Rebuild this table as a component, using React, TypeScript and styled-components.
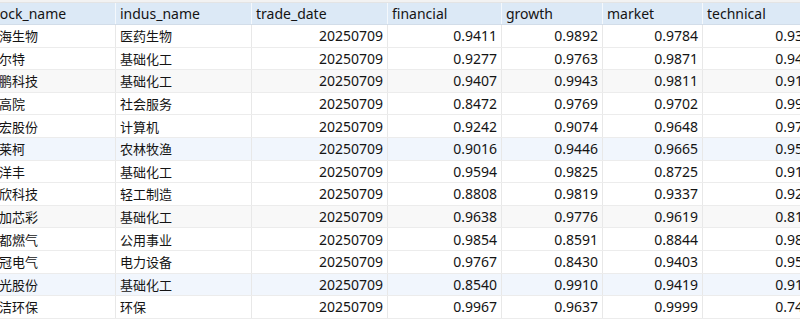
import React from "react";
import styled, { createGlobalStyle } from "styled-components";

const GlobalStyle = createGlobalStyle`
  html, body {
    margin: 0;
    padding: 0;
    background: #ffffff;
  }
`;

const COLS = "132px 136px 136px 114px 101px 100px 121px";

const Viewport = styled.div`
  width: 800px;
  height: 320px;
  overflow: hidden;
  background: #ffffff;
  font-family: "Noto Sans", "Noto Sans CJK SC", sans-serif;
  font-size: 14px;
  color: #141414;
`;

const TopStrip = styled.div`
  height: 3px;
  background: #f2f2f2;
  border-bottom: 1px solid #e4e4e4;
  box-sizing: border-box;
`;

// scrolled horizontally, so the first column is partly hidden
const Grid = styled.div`
  margin-left: -16px;
  width: max-content;
`;

const HeaderRow = styled.div`
  display: grid;
  grid-template-columns: ${COLS};
  height: 21px;
  background: #dce9f6;
  border-bottom: 1px solid #d2dde9;
`;

const HeaderCell = styled.div`
  display: flex;
  align-items: center;
  padding: 0 4px;
  border-right: 1px solid #f4f8fc;
  white-space: nowrap;
  overflow: hidden;
`;

const Row = styled.div<{ $tint?: "gray" | "blue" }>`
  display: grid;
  grid-template-columns: ${COLS};
  height: 22.6px;
  box-sizing: border-box;
  border-bottom: 1px solid #ececec;
  background: ${(p) =>
    p.$tint === "gray" ? "#f8f8f8" : p.$tint === "blue" ? "#f1f6fd" : "#ffffff"};
`;

const Cell = styled.div`
  display: flex;
  align-items: center;
  border-right: 1px solid #e8e8e8;
  white-space: nowrap;
  overflow: hidden;
`;

const TextCell = styled(Cell)<{ $first?: boolean }>`
  justify-content: flex-start;
  padding-left: ${(p) => (p.$first ? "2px" : "4px")};
  font-size: 13px;
`;

const NumCell = styled(Cell)`
  justify-content: flex-end;
  padding-right: 4px;
`;

const headers = [
  "stock_name",
  "indus_name",
  "trade_date",
  "financial",
  "growth",
  "market",
  "technical",
];

type Rec = [string, string, string, string, string, string, string];

const rows: Rec[] = [
  ["南海生物", "医药生物", "20250709", "0.9411", "0.9892", "0.9784", "0.9311"],
  ["嘉尔特", "基础化工", "20250709", "0.9277", "0.9763", "0.9871", "0.9402"],
  ["金鹏科技", "基础化工", "20250709", "0.9407", "0.9943", "0.9811", "0.9175"],
  ["国高院", "社会服务", "20250709", "0.8472", "0.9769", "0.9702", "0.9906"],
  ["恒宏股份", "计算机", "20250709", "0.9242", "0.9074", "0.9648", "0.9731"],
  ["新莱柯", "农林牧渔", "20250709", "0.9016", "0.9446", "0.9665", "0.9552"],
  ["新洋丰", "基础化工", "20250709", "0.9594", "0.9825", "0.8725", "0.9108"],
  ["华欣科技", "轻工制造", "20250709", "0.8808", "0.9819", "0.9337", "0.9264"],
  ["中加芯彩", "基础化工", "20250709", "0.9638", "0.9776", "0.9619", "0.8133"],
  ["成都燃气", "公用事业", "20250709", "0.9854", "0.8591", "0.8844", "0.9827"],
  ["宏冠电气", "电力设备", "20250709", "0.9767", "0.8430", "0.9403", "0.9545"],
  ["阳光股份", "基础化工", "20250709", "0.8540", "0.9910", "0.9419", "0.9170"],
  ["中洁环保", "环保", "20250709", "0.9967", "0.9637", "0.9999", "0.7468"],
];

const tintFor = (i: number): "gray" | "blue" | undefined => {
  if ((i + 1) % 3 !== 0) return undefined;
  return ((i + 1) / 3) % 2 === 1 ? "gray" : "blue";
};

export default function App() {
  return (
    <Viewport>
      <GlobalStyle />
      <TopStrip />
      <Grid>
        <HeaderRow>
          {headers.map((h) => (
            <HeaderCell key={h}>{h}</HeaderCell>
          ))}
        </HeaderRow>
        {rows.map((r, i) => (
          <Row key={i} $tint={tintFor(i)}>
            {r.map((v, j) =>
              j < 2 ? (
                <TextCell key={j} $first={j === 0}>
                  {v}
                </TextCell>
              ) : (
                <NumCell key={j}>{v}</NumCell>
              )
            )}
          </Row>
        ))}
      </Grid>
    </Viewport>
  );
}
